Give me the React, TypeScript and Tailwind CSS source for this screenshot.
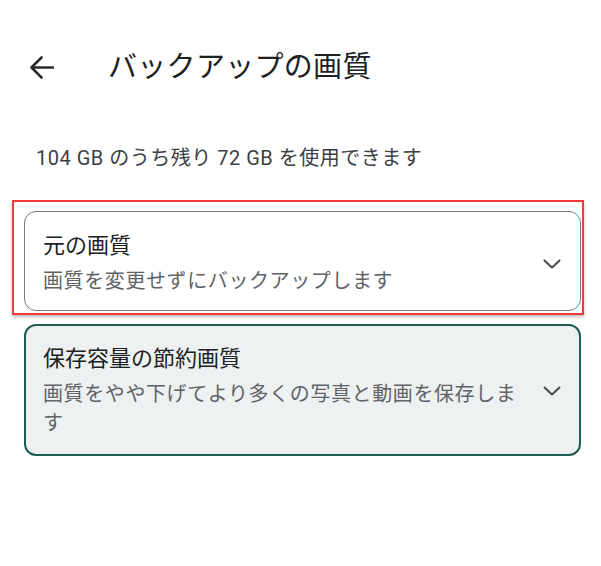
import React from 'react';

const font = { fontFamily: 'Roboto, "Noto Sans CJK JP", sans-serif' };

const Chevron = () => (
    <svg width="18" height="10" viewBox="0 0 18 10" fill="none" className="shrink-0">
        <path d="M1.5 1.5 L9 8.5 L16.5 1.5" stroke="#4a4a4a" strokeWidth="2" strokeLinecap="round" strokeLinejoin="round" />
    </svg>
);

const App = () => {
    return (
        <div className="w-[601px] h-[566px] bg-white overflow-hidden" style={font}>
            {/* header */}
            <div className="flex items-center h-[52px] mt-[41px]">
                <div className="w-[108px] pl-[29px] flex items-center">
                    <svg width="25" height="23" viewBox="0 0 25 23" fill="none">
                        <path d="M24 11.5H2.5 M12.5 1.5 L2.5 11.5 L12.5 21.5" stroke="#2b2b2b" strokeWidth="2.6" strokeLinecap="round" strokeLinejoin="round" />
                    </svg>
                </div>
                <h1 className="text-[29px] leading-[52px] text-[#202124] tracking-[0.3px]">バックアップの画質</h1>
            </div>

            <p className="mt-[51px] pl-[36px] text-[20px] leading-[28px] tracking-[0.5px] text-[#3c4043]">104 GB のうち残り 72 GB を使用できます</p>

            <div className="pl-6 pr-5 mt-[39px] flex flex-col gap-[13px]">
                {/* original quality (highlighted) */}
                <div className="relative">
                    <div className="absolute -left-3 -top-[11px] -right-[3px] -bottom-1 border-2 border-[#ef3b3b] shadow-[0_2px_3px_rgba(0,0,0,0.25)] pointer-events-none" />
                    <div className="flex items-center border-[1.5px] border-[#7d7d7d] rounded-[12px] pl-[18px] pr-[19px] pt-[19px] pb-[14px]">
                        <div className="flex-1">
                            <div className="text-[22px] leading-[30px] text-[#202124]">元の画質</div>
                            <div className="mt-[6px] text-[20px] leading-[29px] tracking-[0.6px] text-[#5f6368] max-w-[485px]">画質を変更せずにバックアップします</div>
                        </div>
                        <Chevron />
                    </div>
                </div>

                {/* storage saver */}
                <div className="flex items-center border-2 border-[#1f5d53] bg-[#edf1f1] rounded-[12px] pl-[17px] pr-[18px] pt-[18px] pb-[16px]">
                    <div className="flex-1">
                        <div className="text-[22px] leading-[30px] text-[#202124]">保存容量の節約画質</div>
                        <div className="mt-[6px] text-[20px] leading-[29px] tracking-[0.6px] text-[#5f6368] max-w-[485px]">画質をやや下げてより多くの写真と動画を保存します</div>
                    </div>
                    <Chevron />
                </div>
            </div>
        </div>
    );
};

export default App;
